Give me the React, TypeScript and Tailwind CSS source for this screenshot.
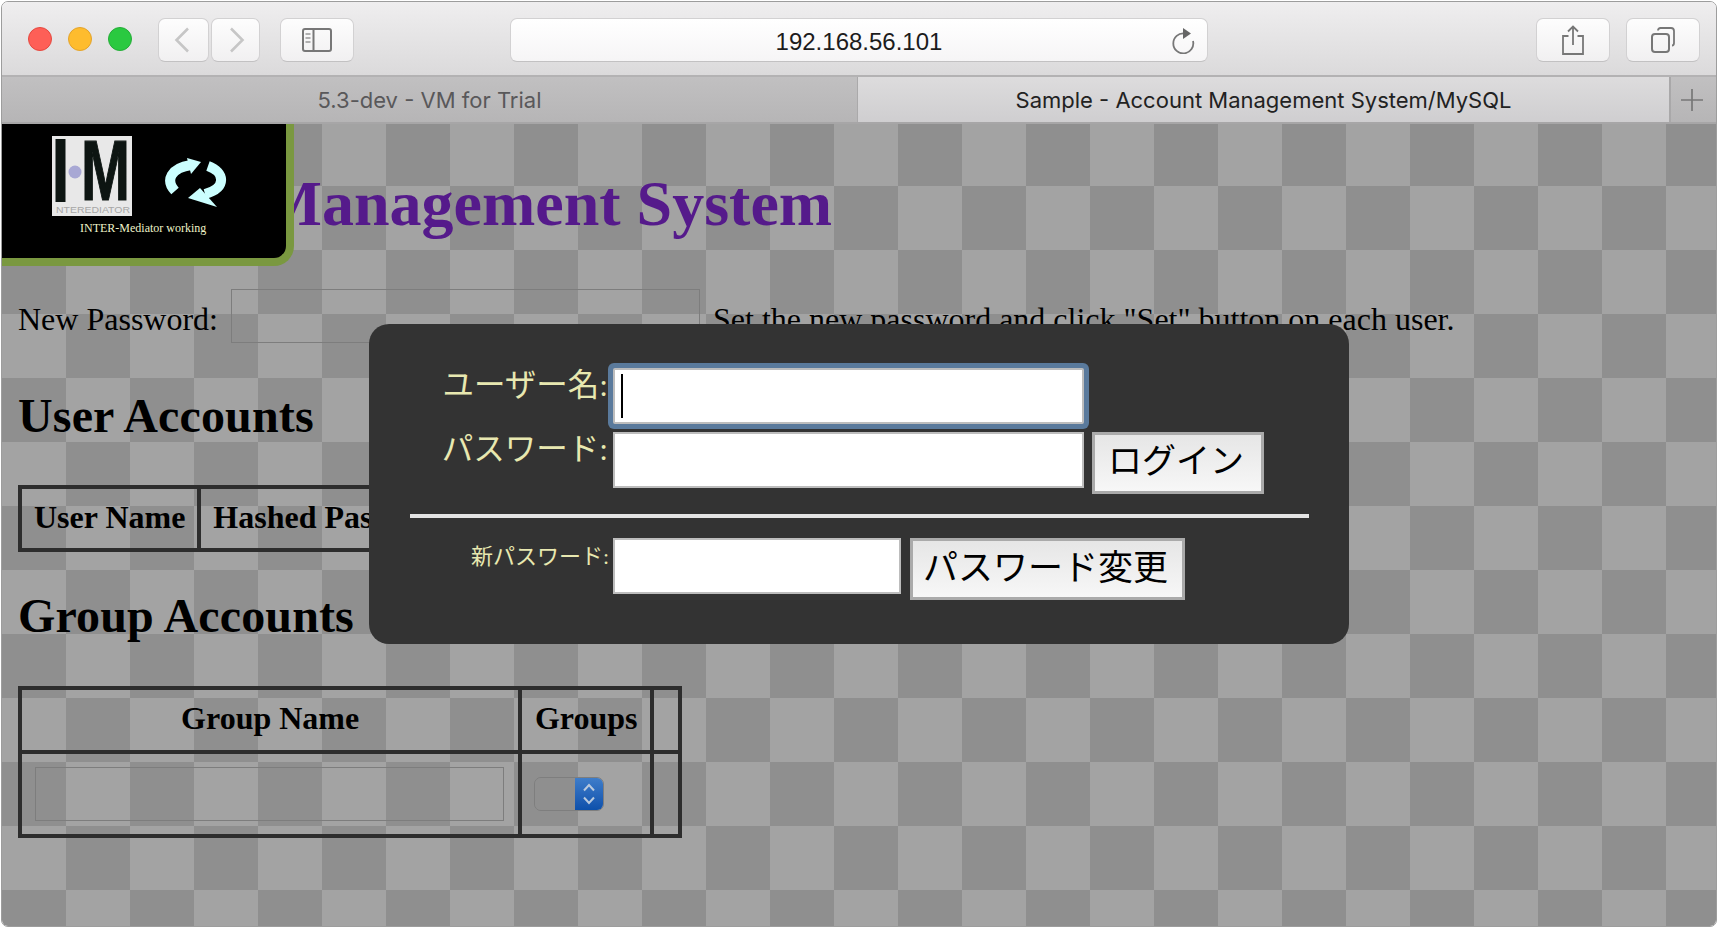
import React from 'react';

const serif = "font-['Liberation_Serif','Noto_Sans_CJK_JP',serif]";

function ToolButton({ className, children }: { className: string; children?: React.ReactNode }) {
  return (
    <div className={`flex h-[44px] items-center justify-center rounded-[7px] border border-[#d2d1d2] border-b-[#c2c1c2] bg-gradient-to-b from-[#fdfdfd] to-[#f1f0f1] ${className}`}>
      {children}
    </div>
  );
}

function Toolbar() {
  return (
    <div className="flex h-[75px] items-start border-b-2 border-[#b3b2b3] bg-gradient-to-b from-[#efeeef] to-[#dbdadb] pl-[26px] pt-[16px]">
      {/* traffic lights */}
      <div className="mt-[9px] flex gap-[16px]">
        <div className="h-[24px] w-[24px] rounded-full border border-[#e5483f] bg-[#fe5f57]" />
        <div className="h-[24px] w-[24px] rounded-full border border-[#e3a32b] bg-[#febc2e]" />
        <div className="h-[24px] w-[24px] rounded-full border border-[#25ad38] bg-[#2ac940]" />
      </div>

      <div className="ml-[26px] flex gap-[2px]">
        <ToolButton className="w-[51px] pr-[4px]">
          <svg width="16" height="26" viewBox="0 0 16 26" fill="none" stroke="#c6c6c6" strokeWidth="2.6">
            <path d="M14 1.5 2.5 13 14 24.5" />
          </svg>
        </ToolButton>
        <ToolButton className="w-[49px] pl-[2px]">
          <svg width="16" height="26" viewBox="0 0 16 26" fill="none" stroke="#c6c6c6" strokeWidth="2.6">
            <path d="M2 1.5 13.5 13 2 24.5" />
          </svg>
        </ToolButton>
      </div>

      <ToolButton className="ml-[20px] w-[74px]">
        <svg width="30" height="24" viewBox="0 0 30 24" fill="none" stroke="#777" strokeWidth="2">
          <rect x="1" y="1" width="28" height="22" rx="2" />
          <path d="M11.5 1v22" />
          <path d="M3.5 6h5M3.5 10h5M3.5 14h5" strokeWidth="1.6" stroke="#999" />
        </svg>
      </ToolButton>

      {/* address bar */}
      <div className="relative ml-[156px] flex h-[44px] w-[698px] items-center justify-center rounded-[7px] border border-[#d2d1d2] border-b-[#c2c1c2] bg-gradient-to-b from-[#ffffff] to-[#f6f5f6]">
        <span className="mt-[3px] font-['Liberation_Sans',sans-serif] text-[24px] text-[#1c1c1c]">192.168.56.101</span>
        <svg className="absolute right-[12px] top-[8px]" width="24" height="27" viewBox="0 0 24 27" fill="none" stroke="#777" strokeWidth="1.8">
          <path d="M13.5 6.5A10 10 0 1 0 22 14" />
          <path d="M12 1l8 5.5-8 5.5z" fill="#666" stroke="none" />
        </svg>
      </div>

      <ToolButton className="ml-[328px] w-[74px]">
        <svg width="24" height="30" viewBox="0 0 24 30" fill="none" stroke="#777" strokeWidth="1.8">
          <path d="M7.5 11H2v18h20V11h-5.5" />
          <path d="M12 20V2M7 6.5 12 1.5l5 5" />
        </svg>
      </ToolButton>
      <ToolButton className="ml-[16px] w-[74px]">
        <svg width="26" height="26" viewBox="0 0 26 26" fill="none" stroke="#777" strokeWidth="2">
          <rect x="2" y="7" width="17" height="18" rx="3" />
          <path d="M8 3.5C8 2 9 1 10.5 1H21c2 0 3 1 3 3v12c0 1.500-.8 2.500-2 2.500" strokeWidth="1.800" />
        </svg>
      </ToolButton>
    </div>
  );
}

function TabBar() {
  return (
    <div className="flex h-[47px] border-b-2 border-[#a7a6a7] font-['Inter',sans-serif] text-[22px] leading-[47px]">
      <div className="flex w-[855px] justify-center bg-gradient-to-b from-[#c1c0c1] to-[#b6b5b6] text-[#59585a]">
        5.3-dev - VM for Trial
      </div>
      <div className="flex w-[812px] justify-center border-l border-[#aaa9aa] bg-gradient-to-b from-[#dddcdd] to-[#cfced0] text-[#222]">
        Sample - Account Management System/MySQL
      </div>
      <div className="flex flex-1 items-center justify-center border-l-2 border-[#a9a8a9] bg-gradient-to-b from-[#c1c0c1] to-[#b6b5b6] pr-[3px]">
        <svg width="24" height="24" viewBox="0 0 24 24" stroke="#777" strokeWidth="1.700">
          <path d="M12 1v22M1 12h22" />
        </svg>
      </div>
    </div>
  );
}

function WorkingPanel() {
  return (
    <div className="absolute left-0 top-0 h-[142px] w-[292px] rounded-br-[20px] border-b-[8px] border-r-[8px] border-[#7a9840] bg-black">
      <svg className="absolute left-[50px] top-[12px]" width="80" height="80" viewBox="0 0 80 80">
        <rect width="80" height="80" fill="#e8e8e8" />
        <rect x="3.500" y="3" width="10" height="63" fill="#0d1512" />
        <circle cx="23" cy="36" r="6.500" fill="#a8a8d4" />
        <text x="29" y="64" fontFamily="Liberation Sans" fontWeight="700" fontSize="86" textLength="49" lengthAdjust="spacingAndGlyphs" fill="#0d1512" stroke="#0d1512" strokeWidth="1.200">M</text>
        <text x="4" y="77" fontFamily="Liberation Sans" fontSize="8.500" textLength="74" lengthAdjust="spacingAndGlyphs" fill="#a6a6a6">NTEREDIATOR</text>
      </svg>
      <svg className="absolute left-[163px] top-[34px]" width="62" height="50" viewBox="0 0 62 50" fill="#ccffff" stroke="none">
        <path d="M10 33C0 22 6 10 26 7" fill="none" stroke="#ccffff" strokeWidth="10" />
        <path d="M22 0 36 4 26 16z" />
        <path d="M43 8C60 14 62 30 40 36" fill="none" stroke="#ccffff" strokeWidth="10" />
        <path d="M52 49 23 40 35 30z" />
      </svg>
      <div className={`absolute left-[78px] top-[95px] text-[12px] text-[#eef2c8] ${serif}`}>INTER-Mediator working</div>
    </div>
  );
}

function PageContent() {
  const th = 'border-4 border-[#2d2d2d] px-[12px] pb-[4px] text-[32px] font-bold';
  const td = 'border-4 border-[#2d2d2d] px-[12px]';
  return (
    <div className={`pl-[16px] text-black ${serif}`}>
      <h1 className="mt-[43px] text-[64px] font-bold leading-[74px] text-[#551a8b]">Account Management System</h1>

      <div className="mt-[48px] flex items-start gap-[13px] text-[32px] leading-[37px]">
        <span className="mt-[12px]">New Password:</span>
        <input className="h-[54px] w-[469px] border border-[#7d7d7d]" />
        <span className="mt-[12px]">Set the new password and click "Set" button on each user.</span>
      </div>

      <h2 className="mt-[45px] text-[48px] font-bold leading-[55px] tracking-[0.15px]">User Accounts</h2>
      <table className="mt-[42px] border-collapse">
        <thead>
          <tr className="h-[63px]">
            <th className={th}>User Name</th>
            <th className={th}>Hashed Password</th>
          </tr>
        </thead>
      </table>

      <h2 className="mt-[36px] text-[48px] font-bold leading-[55px] tracking-[0.15px]">Group Accounts</h2>
      <table className="mt-[43px] w-[664px] border-collapse">
        <thead>
          <tr className="h-[64px]">
            <th className={`w-[501px] ${th}`}>Group Name</th>
            <th className={`w-[132px] ${th}`}>Groups</th>
            <th className={th} />
          </tr>
        </thead>
        <tbody>
          <tr className="h-[84px]">
            <td className={`${td} pl-[13px]`}>
              <input className="block h-[54px] w-[469px] border border-[#7d7d7d]" />
            </td>
            <td className={td}>
              <div className="flex h-[34px] w-[70px] overflow-hidden rounded-[7px] border border-[#7e7e7e]">
                <div className="flex-1 bg-[#8f8f8f]" />
                <div className="flex w-[28px] items-center justify-center bg-gradient-to-b from-[#3e7dca] to-[#0d50ab]">
                  <svg width="14" height="24" viewBox="0 0 14 24" fill="none" stroke="#b9c9dd" strokeWidth="2">
                    <path d="M2 8.500 7 3l5 5.500M2 15.500l5 5.500 5-5.500" />
                  </svg>
                </div>
              </div>
            </td>
            <td className={td} />
          </tr>
        </tbody>
      </table>
    </div>
  );
}

function LoginPanel() {
  const label = 'w-[203px] shrink-0 text-right text-[#e8e8b0]';
  const input = 'h-[56px] border-2 border-[#bdbdbd] bg-white';
  const button = "h-[62px] border-[3px] border-[#aaaaaa] bg-gradient-to-b from-[#e6e6e6] to-[#f7f7f7] pb-[4px] pr-[4px] leading-none text-black font-['Liberation_Sans','Noto_Sans_CJK_JP',sans-serif]";
  return (
    <div className={`absolute left-[367px] top-[200px] h-[320px] w-[980px] rounded-[20px] bg-[#333333] pl-[41px] pr-[40px] pt-[44px] ${serif}`}>
      <div className="flex">
        <div className={`${label} pr-[5px] text-[31.500px] leading-[36px]`}>ユーザー名:</div>
        <div className="relative">
          <input className={`${input} block w-[471px] rounded-[2px] ring-[5px] ring-[#5a7a9c]`} />
          <div className="absolute left-[8px] top-[6px] h-[44px] w-[2px] bg-black" />
        </div>
      </div>
      <div className="mt-[8px] flex items-start">
        <div className={`${label} pr-[5px] text-[31.500px] leading-[36px]`}>パスワード:</div>
        <input className={`${input} w-[471px]`} />
        <button className={`${button} ml-[8px] w-[172px] text-[34px]`}>ログイン</button>
      </div>
      <hr className="mt-[20px] border-t-4 border-[#e4e4e4]" />
      <div className="mt-[20px] flex items-start">
        <div className={`${label} pr-[4px] pt-[5px] text-[22px] leading-[28px]`}>新パスワード:</div>
        <input className={`${input} w-[288px]`} />
        <button className={`${button} ml-[9px] w-[275px] text-[35px]`}>パスワード変更</button>
      </div>
    </div>
  );
}

export default function App() {
  return (
    <div className="h-[928px] w-[1718px] overflow-hidden bg-white p-px">
      <div className="flex h-full flex-col overflow-hidden rounded-[7px] border border-[#9d9d9d]">
        <Toolbar />
        <TabBar />
        {/* dimmed page behind the login dialog */}
        <div className="relative flex-1 bg-[image:repeating-conic-gradient(#a3a3a3_0_25%,#8f8f8f_0_50%)] bg-[length:128px_128px] bg-[position:0px_-2px]">
          <PageContent />
          <WorkingPanel />
          <LoginPanel />
        </div>
      </div>
    </div>
  );
}
